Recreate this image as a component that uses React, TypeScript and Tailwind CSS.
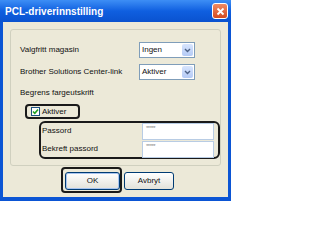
import { ReactNode } from 'react';

const font = { fontFamily: '"Liberation Sans", Arial, sans-serif' };

function Select({ value }: { value: string }) {
  return (
    <div className="flex h-[16px] w-[56px] border border-[#7F9DB9] bg-white">
      <span className="flex-1 pl-[2px] text-[8px] leading-[14px] text-[#111]">{value}</span>
      <span className="m-[1px] flex w-[11px] items-center justify-center rounded-[2px] bg-gradient-to-b from-[#D8E5FD] to-[#B4CAF5]">
        <svg width="7" height="5" viewBox="0 0 7 5">
          <path d="M1 1 L3.5 3.5 L6 1" fill="none" stroke="#4D6185" strokeWidth="1.4" />
        </svg>
      </span>
    </div>
  );
}

function PasswordRow({ label }: { label: string }) {
  return (
    <div className="flex h-[17px] items-center">
      <span className="w-[100px] text-[8px] leading-[10px] text-[#111]">{label}</span>
      <div className="flex h-[17px] w-[72px] items-start border border-[#B8CCE4] bg-white pl-[3px]">
        <span className="text-[6px] leading-[9px] tracking-[-0.5px] text-[#8A8A8A]">*****</span>
      </div>
    </div>
  );
}

function XpButton({ children, isDefault }: { children: ReactNode; isDefault?: boolean }) {
  return (
    <div
      className={`flex h-[18px] items-center justify-center rounded-[3px] border border-[#003C74] bg-gradient-to-b from-[#FFFFFF] to-[#E3E2DA] text-[8px] text-[#111] ${
        isDefault ? 'w-[55px] shadow-[inset_0_0_0_1px_#A8C4EF]' : 'w-[50px]'
      }`}
    >
      {children}
    </div>
  );
}

export default function App() {
  return (
    <div style={font} className="flex h-[201px] w-[231px] flex-col bg-[#0B55D4]">
      {/* Title bar */}
      <div className="flex h-[22px] items-center justify-between bg-gradient-to-b from-[#3D8EF5] via-[#0F5FE0] to-[#0A52CF] pl-[5px] pr-[3px]">
        <span className="text-[10px] font-bold text-white">PCL-driverinnstilling</span>
        <div className="flex h-[16px] w-[16px] items-center justify-center rounded-[3px] border border-white bg-gradient-to-b from-[#F08A62] to-[#D4491E]">
          <svg width="9" height="9" viewBox="0 0 9 9">
            <path d="M1.5 1.5 L7.5 7.5 M7.5 1.5 L1.5 7.5" stroke="white" strokeWidth="1.8" />
          </svg>
        </div>
      </div>

      {/* Body */}
      <div className="mx-[3px] mb-[4px] flex flex-1 flex-col bg-[#ECE9D8] pl-[7px] pt-[7px]">
        <div className="flex h-[137px] w-[211px] flex-col rounded-[3px] border border-[#D0D0BF]">
          <div className="mt-[12px] flex items-center pl-[9px]">
            <span className="w-[119px] text-[8px] leading-[10px] text-[#111]">Valgfritt magasin</span>
            <Select value="Ingen" />
          </div>
          <div className="mt-[6px] flex items-center pl-[9px]">
            <span className="w-[119px] text-[8px] leading-[10px] text-[#111]">Brother Solutions Center-link</span>
            <Select value="Aktiver" />
          </div>
          <div className="mt-[8px] pl-[9px] text-[8px] leading-[10px] text-[#111]">Begrens fargeutskrift</div>

          <div className="ml-[14px] mt-[6px] flex h-[15px] w-[55px] items-center gap-[2px] rounded-[4px] border-2 border-[#1A1A1A] pl-[4px]">
            <span className="flex h-[9px] w-[9px] items-center justify-center border border-[#1C5180] bg-white">
              <svg width="7" height="7" viewBox="0 0 7 7">
                <path d="M1 3.5 L2.8 5.3 L6 1.5" fill="none" stroke="#21A121" strokeWidth="1.6" />
              </svg>
            </span>
            <span className="text-[8px] leading-[10px] text-[#111]">Aktiver</span>
          </div>

          <div className="ml-[28px] mt-[2px] flex h-[38px] w-[181px] flex-col justify-center gap-[1px] rounded-[6px] border-2 border-[#1A1A1A] pl-[1px]">
            <PasswordRow label="Passord" />
            <PasswordRow label="Bekreft passord" />
          </div>
        </div>

        {/* Buttons */}
        <div className="ml-[51px] mt-[1px] flex items-center">
          <div className="flex h-[26px] w-[61px] items-center rounded-[4px] border-2 border-[#1A1A1A] pl-[2px] pt-[1px]">
            <XpButton isDefault>OK</XpButton>
          </div>
          <div className="ml-[2px] pt-[1px]">
            <XpButton>Avbryt</XpButton>
          </div>
        </div>
      </div>
    </div>
  );
}
